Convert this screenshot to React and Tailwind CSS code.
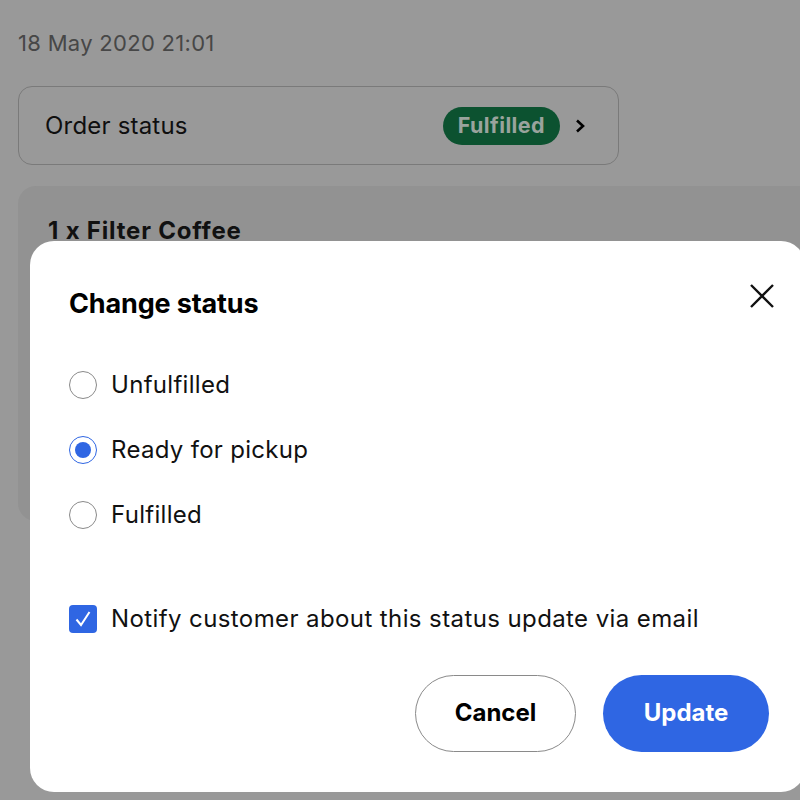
import React from "react";

export default function App() {
  const font = { fontFamily: "Inter, 'Noto Sans', sans-serif" };
  return (
    <div className="relative w-[800px] h-[800px] overflow-hidden bg-[#999999]" style={font}>
      <div className="flex flex-col pl-[18px] pt-[29px]">
        <div className="text-[22px] tracking-[0.3px] leading-[28px] text-[#474747]">18 May 2020 21:01</div>
        <div className="mt-[29px] w-[601px] h-[79px] rounded-[14px] border border-[#7a7a7a] flex items-center pl-[26px] pr-[32px]">
          <span className="text-[24px] tracking-[0.2px] text-[#0f0f0f] flex-1">Order status</span>
          <span className="h-[38px] px-[15px] rounded-full bg-[#0c5230] text-[#9aa39d] font-bold text-[21.5px] tracking-[0.4px] flex items-center">Fulfilled</span>
          <svg className="ml-[14px]" width="12" height="16" viewBox="0 0 12 16" fill="none">
            <path d="M3 2.5 L9 8 L3 13.5" stroke="#000" strokeWidth="2.6" />
          </svg>
        </div>
        <div className="mt-[21px] h-[335px] rounded-l-[18px] bg-[#929292] pl-[30px] pt-[27px]">
          <div className="text-[24px] font-bold tracking-[0.8px] text-[#111]">1 x Filter Coffee</div>
        </div>
      </div>

      <div className="absolute left-[30px] top-[241px] w-[775px] h-[551px] rounded-[24px] bg-white pl-[39px] pr-[32px]">
        <div className="flex items-center justify-between pt-[43px]">
          <div className="text-[27px] font-bold tracking-[-0.15px] text-black">Change status</div>
          <svg width="26" height="26" viewBox="0 0 26 26" className="mr-[-2px] mt-[-16px]">
            <path d="M2 2 L24 24 M24 2 L2 24" stroke="#111" strokeWidth="2.4" />
          </svg>
        </div>
        <div className="flex flex-col gap-[37px] mt-[46px]">
          {[
            ["Unfulfilled", false],
            ["Ready for pickup", true],
            ["Fulfilled", false],
          ].map(([label, sel]) => (
            <div key={label} className="flex items-center h-[28px]">
              {sel ? (
                <span className="w-[28px] h-[28px] rounded-full border-[1.5px] border-[#2f66e3] flex items-center justify-center">
                  <span className="w-[16px] h-[16px] rounded-full bg-[#2f66e3]" />
                </span>
              ) : (
                <span className="w-[28px] h-[28px] rounded-full border-[1.5px] border-[#8a8a8a]" />
              )}
              <span className="ml-[14px] text-[24px] tracking-[0.3px] text-[#111]">{label}</span>
            </div>
          ))}
        </div>
        <div className="flex items-center mt-[72px]">
          <span className="w-[28px] h-[28px] rounded-[4px] bg-[#2f66e3] flex items-center justify-center">
            <svg width="20" height="20" viewBox="0 0 20 20" fill="none">
              <path d="M3.5 10.5 L8 16 L16.5 3" stroke="#fff" strokeWidth="2" />
            </svg>
          </span>
          <span className="ml-[14px] text-[24px] tracking-[0.4px] text-[#111]">Notify customer about this status update via email</span>
        </div>
        <div className="flex justify-end gap-[27px] mt-[38px] pr-[4px]">
          <button className="w-[161px] h-[77px] rounded-full border border-[#8a8a8a] bg-white text-[24px] font-bold text-black">Cancel</button>
          <button className="w-[166px] h-[77px] rounded-full bg-[#2f66e3] text-[24px] font-bold text-white">Update</button>
        </div>
      </div>
    </div>
  );
}
